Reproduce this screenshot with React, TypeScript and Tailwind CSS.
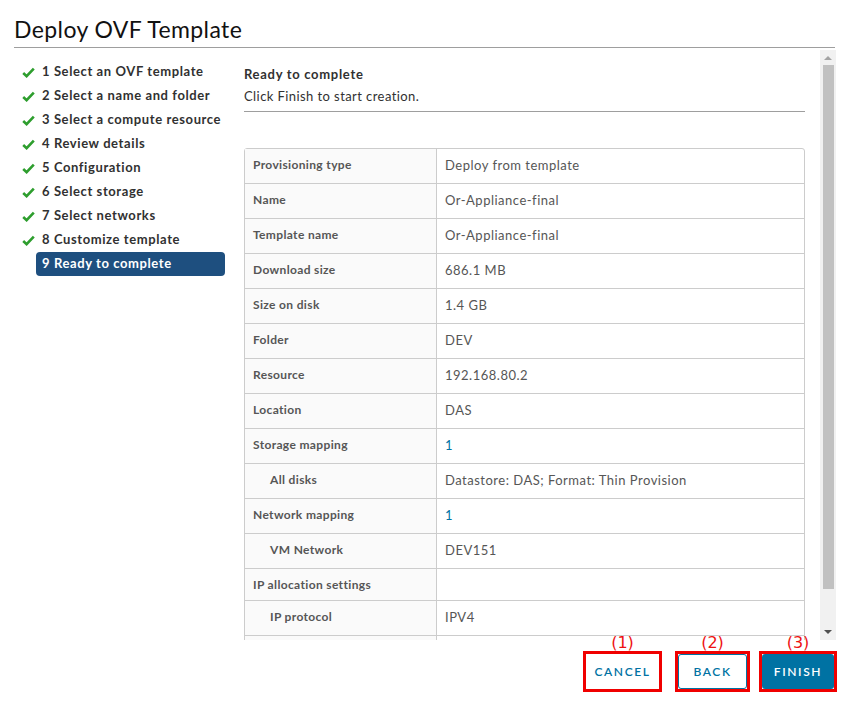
import React from "react";

const steps = [
  "1 Select an OVF template",
  "2 Select a name and folder",
  "3 Select a compute resource",
  "4 Review details",
  "5 Configuration",
  "6 Select storage",
  "7 Select networks",
  "8 Customize template",
];

type Row = { label: string; value: string; indent?: boolean; link?: boolean; h: number };
const rows: Row[] = [
  { label: "Provisioning type", value: "Deploy from template", h: 35 },
  { label: "Name", value: "Or-Appliance-final", h: 35 },
  { label: "Template name", value: "Or-Appliance-final", h: 35 },
  { label: "Download size", value: "686.1 MB", h: 35 },
  { label: "Size on disk", value: "1.4 GB", h: 35 },
  { label: "Folder", value: "DEV", h: 35 },
  { label: "Resource", value: "192.168.80.2", h: 35 },
  { label: "Location", value: "DAS", h: 35 },
  { label: "Storage mapping", value: "1", link: true, h: 35 },
  { label: "All disks", value: "Datastore: DAS; Format: Thin Provision", indent: true, h: 35 },
  { label: "Network mapping", value: "1", link: true, h: 35 },
  { label: "VM Network", value: "DEV151", indent: true, h: 35 },
  { label: "IP allocation settings", value: "", h: 32 },
  { label: "IP protocol", value: "IPV4", indent: true, h: 35 },
  { label: "", value: "", indent: true, h: 35 },
];

function Check() {
  return (
    <svg width="13" height="11" viewBox="0 0 13 11" className="shrink-0">
      <path d="M1.2 6 L4.6 9.2 L11.8 1.6" fill="none" stroke="#2e9e2e" strokeWidth="2.6" strokeLinejoin="miter" />
    </svg>
  );
}

const buttons = [
  { label: "CANCEL", n: "(1)", w: 79, kind: "flat", ml: 0 },
  { label: "BACK", n: "(2)", w: 75, kind: "outline", ml: 13 },
  { label: "FINISH", n: "(3)", w: 78, kind: "solid", ml: 9 },
];

export default function App() {
  return (
    <div className="w-[850px] h-[707px] bg-white relative overflow-hidden font-['Lato',sans-serif] text-[#313131]">
      <div className="ml-[14px] mr-[15px] h-[48px] border-b border-[#9e9e9e] flex items-center">
        <h1 className="text-[23px] font-normal text-[#111] leading-none pt-[12px] tracking-[0.4px]">Deploy OVF Template</h1>
      </div>
      <div className="flex h-[592px]">
        <div className="w-[236px] shrink-0 pt-[12px] pl-[22px]">
          {steps.map((s) => (
            <div key={s} className="h-[24px] flex items-center gap-[7px]">
              <Check />
              <span className="text-[13px] font-bold text-[#313131] tracking-[0.6px]">{s}</span>
            </div>
          ))}
          <div className="h-[24px] w-[189px] ml-[14px] rounded-[4px] bg-[#1e4f7f] flex items-center pl-[6px]">
            <span className="text-[13px] font-bold text-white tracking-[0.6px]">9 Ready to complete</span>
          </div>
        </div>
        <div className="flex-1 flex">
          <div className="w-[584px] pl-[8px] overflow-hidden">
            <div className="w-[561px]">
              <div className="pt-[17px] text-[13px] font-bold text-[#313131] leading-[18px] tracking-[0.7px]">Ready to complete</div>
              <div className="pt-[4px] text-[13px] text-[#313131] leading-[18px] tracking-[0.42px]">Click Finish to start creation.</div>
              <div className="mt-[6px] border-b border-[#9e9e9e]" />
              <div className="mt-[36px] border border-[#cccccc] rounded-tr-[3px] rounded-tl-[3px]">
                {rows.map((r, i) => (
                  <div
                    key={i}
                    className={`flex ${i > 0 ? "border-t border-[#cccccc]" : ""}`}
                    style={{ height: r.h - (i > 0 ? 0 : 1) }}
                  >
                    <div
                      className={`w-[192px] shrink-0 bg-[#fafafa] border-r border-[#cccccc] pt-[7px] text-[12px] font-bold text-[#565656] tracking-[0.35px] ${r.indent ? "pl-[25px]" : "pl-[8px]"}`}
                    >
                      {r.label}
                    </div>
                    <div className={`pl-[8px] pt-[7px] text-[13px] tracking-[0.5px] ${r.link ? "text-[#0072a3]" : "text-[#565656]"}`}>
                      {r.value}
                    </div>
                  </div>
                ))}
              </div>
            </div>
          </div>
          <div className="w-[16px] mt-[2px] h-[590px] bg-[#f1f1f1] flex flex-col items-center">
            <div className="h-[15px] flex items-center justify-center">
              <div className="w-0 h-0 border-l-[4px] border-r-[4px] border-b-[4px] border-l-transparent border-r-transparent border-b-[#a3a3a3]" />
            </div>
            <div className="w-[11px] h-[524px] bg-[#c1c1c1]" />
            <div className="flex-1" />
            <div className="h-[16px] flex items-center justify-center">
              <div className="w-0 h-0 border-l-[4px] border-r-[4px] border-t-[4px] border-l-transparent border-r-transparent border-t-[#505050]" />
            </div>
          </div>
        </div>
      </div>
      <div className="flex justify-end pr-[13px] pt-[11px]">
        {buttons.map((b) => (
          <div key={b.label} className="relative shrink-0" style={{ marginLeft: b.ml }}>
            <span className="absolute left-0 right-0 -top-[17px] text-center text-[16px] leading-[18px] text-[#ee1111] font-['DejaVu_Sans',sans-serif]">
              {b.n}
            </span>
            <div className="border-[3px] border-[#f00000] h-[41px] box-border" style={{ width: b.w }}>
              <div
                className={`h-full w-full flex items-center justify-center text-[12px] font-semibold tracking-[1.6px] rounded-[3px] ${
                  b.kind === "solid"
                    ? "bg-[#0072a3] text-white"
                    : b.kind === "outline"
                    ? "border border-[#0072a3] text-[#0072a3]"
                    : "text-[#0072a3]"
                }`}
              >
                {b.label}
              </div>
            </div>
          </div>
        ))}
      </div>
    </div>
  );
}
